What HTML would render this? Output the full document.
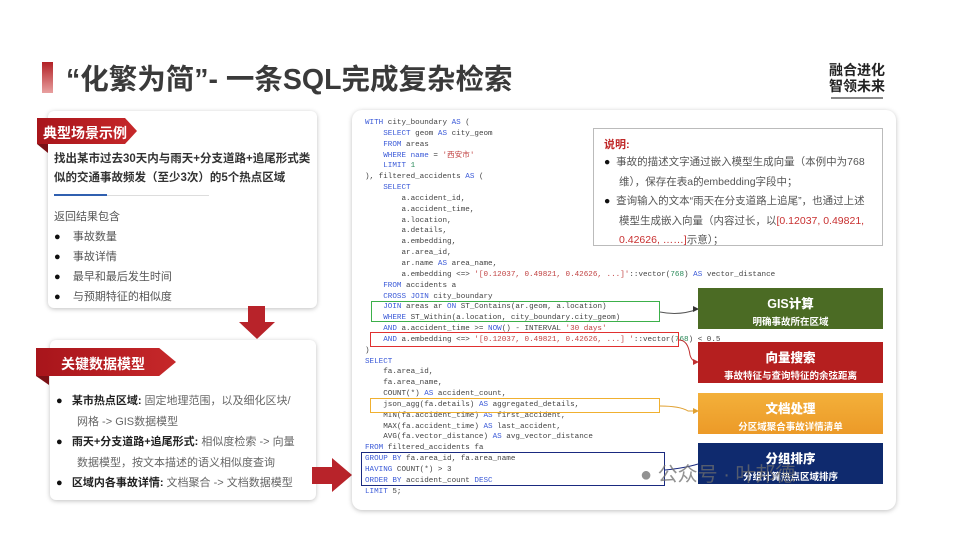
<!DOCTYPE html>
<html><head><meta charset="utf-8"><style>
*{margin:0;padding:0;box-sizing:border-box}
body{width:964px;height:536px;background:#fff;position:relative;overflow:hidden;font-family:"Liberation Sans","Noto Sans CJK SC",sans-serif;color:#333}
.abs{position:absolute}
.card{position:absolute;background:#fff;border-radius:6px;box-shadow:0 1px 5px rgba(0,0,0,.25)}
.tag{position:absolute;color:#fff;font-weight:bold;font-size:14px;background:linear-gradient(90deg,#a8151b,#c6282a);clip-path:polygon(0 0,88% 0,100% 50%,88% 100%,0 100%)}
.code{position:absolute;left:365px;top:118px;font-family:"Liberation Mono","Noto Sans CJK SC",monospace;font-size:7.6px;line-height:10.85px;color:#444;white-space:pre}
.k{color:#3b5ad8}.s{color:#c04040}.n{color:#2a8a5a}
.box{position:absolute;border:1.5px solid}
.rb{position:absolute;left:698px;width:185px;height:41px;color:#fff;text-align:center;font-weight:bold}
.rb b{display:block;font-size:12.5px;margin-top:5px}
.rb i{display:block;font-style:normal;font-size:9.5px;margin-top:2px}
ul.l{list-style:none}
</style></head><body>
<div class="abs" style="left:42px;top:62px;width:11px;height:31px;background:linear-gradient(#b22025,#e8a0a0)"></div>
<div class="abs" style="left:66px;top:57px;font-size:28.5px;font-weight:bold;color:#3a3a3a">“化繁为简”- 一条SQL完成复杂检索</div>
<div class="abs" style="left:829px;top:62px;font-size:14px;font-weight:bold;line-height:16px;color:#222">融合进化<br>智领未来</div>
<div class="abs" style="left:831px;top:97px;width:52px;height:2px;background:#888"></div>

<div class="card" style="left:48px;top:111px;width:269px;height:197px"></div>
<div class="tag" style="left:37px;top:118px;width:100px;height:26px;padding:5px 0 0 6px">典型场景示例</div>
<div class="abs" style="left:37px;top:144px;width:0;height:0;border-top:9px solid #7a1015;border-left:11px solid transparent"></div>
<div class="abs" style="left:54px;top:150px;font-size:11.5px;font-weight:bold;line-height:19px;color:#333">找出某市过去30天内与雨天+分支道路+追尾形式类<br>似的交通事故频发（至少3次）的5个热点区域</div>
<div class="abs" style="left:54px;top:195px;width:155px;height:1px;background:#ddd"></div>
<div class="abs" style="left:54px;top:194px;width:53px;height:2px;background:#3060b0"></div>
<div class="abs" style="left:54px;top:207px;font-size:11px;line-height:20px;color:#555">返回结果包含</div>
<ul class="l abs" style="left:54px;top:227px;font-size:11px;line-height:20px;color:#555">
<li><span style="color:#111">●</span>&nbsp;&nbsp;&nbsp;&nbsp;事故数量</li><li><span style="color:#111">●</span>&nbsp;&nbsp;&nbsp;&nbsp;事故详情</li><li><span style="color:#111">●</span>&nbsp;&nbsp;&nbsp;&nbsp;最早和最后发生时间</li><li><span style="color:#111">●</span>&nbsp;&nbsp;&nbsp;&nbsp;与预期特征的相似度</li></ul>

<div class="abs" style="left:248px;top:306px;width:17px;height:16px;background:#b8232a"></div>
<div class="abs" style="left:239px;top:322px;width:0;height:0;border-left:18px solid transparent;border-right:18px solid transparent;border-top:17px solid #b8232a"></div>

<div class="card" style="left:50px;top:340px;width:266px;height:160px"></div>
<div class="tag" style="left:36px;top:348px;width:140px;height:28px;padding:6px 0 0 25px">关键数据模型</div>
<div class="abs" style="left:36px;top:376px;width:0;height:0;border-top:9px solid #7a1015;border-left:13px solid transparent"></div>
<div class="abs" style="left:56px;top:391px;font-size:11px;line-height:20.5px;color:#666">
<div><span style="color:#111">●</span>&nbsp;&nbsp;&nbsp;<b style="color:#222">某市热点区域:</b> 固定地理范围，以及细化区块/</div>
<div style="padding-left:21px">网格 -&gt; GIS数据模型</div>
<div><span style="color:#111">●</span>&nbsp;&nbsp;&nbsp;<b style="color:#222">雨天+分支道路+追尾形式:</b> 相似度检索 -&gt; 向量</div>
<div style="padding-left:21px">数据模型，按文本描述的语义相似度查询</div>
<div><span style="color:#111">●</span>&nbsp;&nbsp;&nbsp;<b style="color:#222">区域内各事故详情:</b> 文档聚合 -&gt; 文档数据模型</div></div>
<div class="abs" style="left:312px;top:467px;width:20px;height:17px;background:#b8232a"></div>
<div class="abs" style="left:332px;top:458px;width:0;height:0;border-top:17px solid transparent;border-bottom:17px solid transparent;border-left:20px solid #b8232a"></div>

<div class="card" style="left:352px;top:110px;width:544px;height:400px;border-radius:10px"></div>
<div class="code"><span class="k">WITH</span> city_boundary <span class="k">AS</span> (
    <span class="k">SELECT</span> geom <span class="k">AS</span> city_geom
    <span class="k">FROM</span> areas
    <span class="k">WHERE</span> <span class="k">name</span> = <span class="s">'西安市'</span>
    <span class="k">LIMIT</span> <span class="n">1</span>
), filtered_accidents <span class="k">AS</span> (
    <span class="k">SELECT</span>
        a.accident_id,
        a.accident_time,
        a.location,
        a.details,
        a.embedding,
        ar.area_id,
        ar.name <span class="k">AS</span> area_name,
        a.embedding &lt;=&gt; <span class="s">'[0.12037, 0.49821, 0.42626, ...]'</span>::vector(<span class="n">768</span>) <span class="k">AS</span> vector_distance
    <span class="k">FROM</span> accidents a
    <span class="k">CROSS JOIN</span> city_boundary
    <span class="k">JOIN</span> areas ar <span class="k">ON</span> ST_Contains(ar.geom, a.location)
    <span class="k">WHERE</span> ST_Within(a.location, city_boundary.city_geom)
    <span class="k">AND</span> a.accident_time &gt;= <span class="k">NOW</span>() - INTERVAL <span class="s">'30 days'</span>
    <span class="k">AND</span> a.embedding &lt;=&gt; <span class="s">'[0.12037, 0.49821, 0.42626, ...] '</span>::vector(<span class="n">768</span>) &lt; 0.5
)
<span class="k">SELECT</span>
    fa.area_id,
    fa.area_name,
    COUNT(*) <span class="k">AS</span> accident_count,
    json_agg(fa.details) <span class="k">AS</span> aggregated_details,
    MIN(fa.accident_time) <span class="k">AS</span> first_accident,
    MAX(fa.accident_time) <span class="k">AS</span> last_accident,
    AVG(fa.vector_distance) <span class="k">AS</span> avg_vector_distance
<span class="k">FROM</span> filtered_accidents fa
<span class="k">GROUP BY</span> fa.area_id, fa.area_name
<span class="k">HAVING</span> COUNT(*) &gt; 3
<span class="k">ORDER BY</span> accident_count <span class="k">DESC</span>
<span class="k">LIMIT</span> 5;</div>
<div class="box" style="left:371px;top:301px;width:289px;height:21px;border-color:#3cb04a"></div>
<div class="box" style="left:370px;top:332px;width:309px;height:15px;border-color:#e03030"></div>
<div class="box" style="left:370px;top:398px;width:290px;height:15px;border-color:#f0b030"></div>
<div class="box" style="left:361px;top:452px;width:304px;height:34px;border-color:#1a2a80"></div>
<svg class="abs" style="left:0;top:0" width="964" height="536">
<path d="M660 312 Q680 316 698 309" stroke="#555" fill="none"/><path d="M693 306 L699 309 L693 312Z" fill="#333"/>
<path d="M679 340 Q688 340 690 355 Q692 362 698 362" stroke="#c03030" fill="none"/><path d="M693 359 L699 362 L693 365Z" fill="#c03030"/>
<path d="M660 406 Q680 406 688 411 L698 411" stroke="#e0a030" fill="none"/><path d="M693 408 L699 411 L693 414Z" fill="#e0a030"/>
<path d="M665 470 Q685 468 698 464" stroke="#1a2a80" fill="none"/>
</svg>
<div class="abs" style="left:593px;top:128px;width:290px;height:118px;border:1px solid #bbb;background:#fff"></div>
<div class="abs" style="left:604px;top:136px;font-size:11px;font-weight:bold;color:#c02828">说明:</div>
<div class="abs" style="left:604px;top:153px;font-size:10.5px;line-height:19.5px;color:#555">
<div><span style="color:#111">●</span>&nbsp;&nbsp;事故的描述文字通过嵌入模型生成向量（本例中为768</div>
<div style="padding-left:15px">维），保存在表a的embedding字段中；</div>
<div><span style="color:#111">●</span>&nbsp;&nbsp;查询输入的文本“雨天在分支道路上追尾”，也通过上述</div>
<div style="padding-left:15px">模型生成嵌入向量（内容过长，以<span style="color:#c83030">[0.12037, 0.49821,</span></div>
<div style="padding-left:15px"><span style="color:#c83030">0.42626, ……]</span>示意）；</div></div>
<div class="rb" style="top:288px;background:#4b6b24"><b>GIS计算</b><i>明确事故所在区域</i></div>
<div class="rb" style="top:342px;background:#b51f1f"><b>向量搜索</b><i>事故特征与查询特征的余弦距离</i></div>
<div class="rb" style="top:393px;background:linear-gradient(#f3b03a,#ec9a28)"><b>文档处理</b><i>分区域聚合事故详情清单</i></div>
<div class="rb" style="top:443px;background:#0f2a6e"><b>分组排序</b><i>分组计算热点区域排序</i></div>
<div class="abs" style="left:640px;top:458px;font-size:20px;color:rgba(110,110,110,.75)">● 公众号 · 叶邦德</div>
</body></html>
